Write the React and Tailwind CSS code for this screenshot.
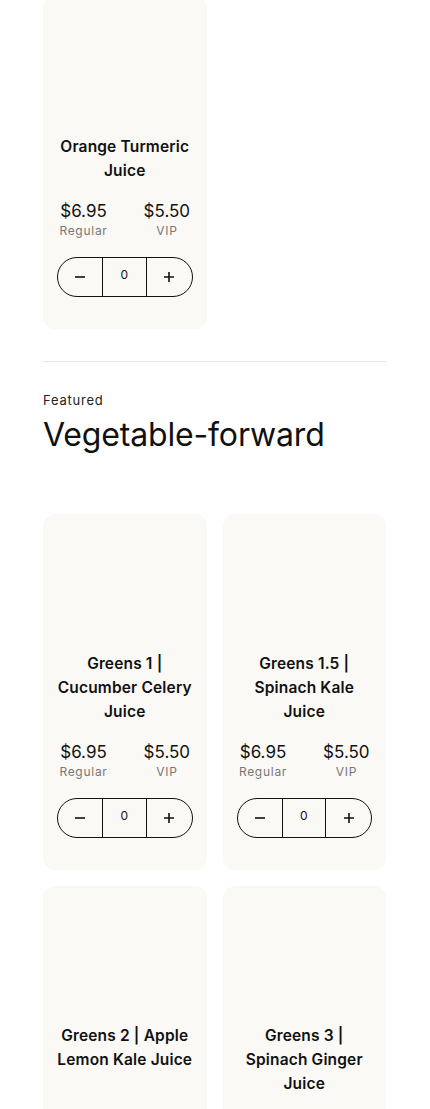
import React from "react";

const font = { fontFamily: "Inter, 'Liberation Sans', sans-serif" };

const Minus = () => (
  <svg width="12" height="12" viewBox="0 0 12 12" fill="none" stroke="currentColor" strokeWidth="1.6">
    <path d="M1 6h10" />
  </svg>
);

const Plus = () => (
  <svg width="12" height="12" viewBox="0 0 12 12" fill="none" stroke="currentColor" strokeWidth="1.6">
    <path d="M1 6h10M6 1v10" />
  </svg>
);

// title lines are split the way the product grid wraps them
const ProductCard = ({ lines }) => (
  <div className="flex flex-col rounded-[12px] bg-[#faf9f6] px-[14px] pt-[14px] pb-[32px]">
    <div className="h-[120px] w-full" />
    <h3 className="-mx-[4px] mt-[4px] flex-1 text-center text-[15.5px] font-semibold leading-[24px] tracking-[0.01em] text-[#111]">
      {lines.map((l) => (
        <span key={l} className="block whitespace-nowrap">
          {l}
        </span>
      ))}
    </h3>
    <div className="mt-[16px] flex justify-center gap-[36px]">
      <div className="flex flex-col items-center">
        <span className="text-[17px] leading-[24px] text-[#111]">$6.95</span>
        <span className="text-[12px] leading-[16px] tracking-[0.06em] text-[#777]">Regular</span>
      </div>
      <div className="flex flex-col items-center">
        <span className="text-[17px] leading-[24px] text-[#111]">$5.50</span>
        <span className="text-[12px] leading-[16px] tracking-[0.06em] text-[#777]">VIP</span>
      </div>
    </div>
    <div className="mt-[18px] flex h-[40px] w-full items-stretch rounded-full border border-[#111] text-[#111]">
      <button className="flex w-[44px] items-center justify-center">
        <Minus />
      </button>
      <div className="flex flex-1 items-center justify-center border-x border-[#111] pb-[4px] text-[12px]">0</div>
      <button className="flex w-[45px] items-center justify-center">
        <Plus />
      </button>
    </div>
  </div>
);

export default function App() {
  return (
    <div className="min-h-screen bg-white" style={font}>
      <div className="ml-[43px] w-[343px] pb-[40px]">
        <div className="mt-[-3px] grid grid-cols-2 gap-[16px]">
          <ProductCard lines={["Orange Turmeric", "Juice"]} />
        </div>

        <hr className="mt-[32px] border-t border-[#e6e6e6]" />

        <section className="mt-[30px]">
          <p className="text-[13px] leading-[16px] tracking-[0.06em] text-[#222]">Featured</p>
          <h2 className="mt-[5px] text-[32px] font-normal leading-[44px] tracking-[-0.005em] text-[#111]">
            Vegetable-forward
          </h2>
        </section>

        <div className="mt-[57px] grid grid-cols-2 gap-[16px]">
          <ProductCard lines={["Greens 1 |", "Cucumber Celery", "Juice"]} />
          <ProductCard lines={["Greens 1.5 |", "Spinach Kale", "Juice"]} />
          <ProductCard lines={["Greens 2 | Apple", "Lemon Kale Juice"]} />
          <ProductCard lines={["Greens 3 |", "Spinach Ginger", "Juice"]} />
        </div>
      </div>
    </div>
  );
}
